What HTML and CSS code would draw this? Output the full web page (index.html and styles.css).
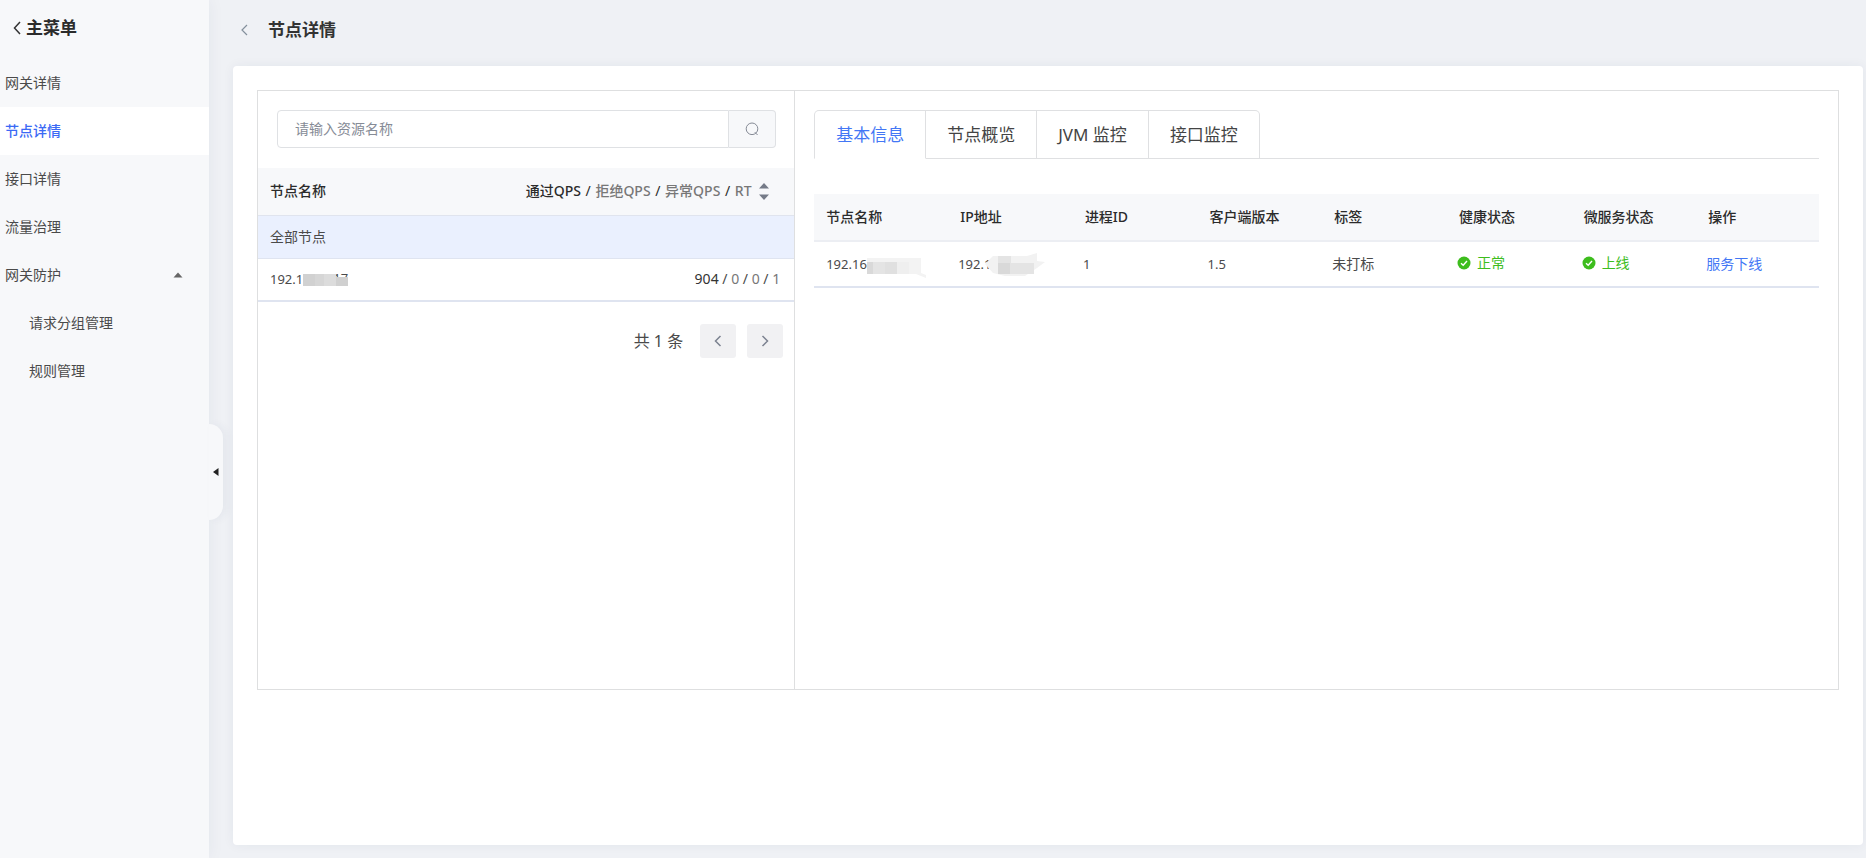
FILE: index.html
```html
<!DOCTYPE html>
<html lang="zh-CN">
<head>
<meta charset="utf-8">
<meta name="viewport" content="width=device-width, initial-scale=1">
<title>节点详情</title>
<link rel="stylesheet" href="styles.css">
</head>
<body>
<div class="app">
  <aside class="sidebar">
    <a class="menu-title" href="#">
      <svg class="menu-back" viewBox="0 0 8 14" width="8" height="14" aria-hidden="true"><path d="M7 1 L1.5 7 L7 13"/></svg>
      <span>主菜单</span>
    </a>
    <nav class="menu">
      <a class="menu-item" href="#">网关详情</a>
      <a class="menu-item menu-item-active" href="#">节点详情</a>
      <a class="menu-item" href="#">接口详情</a>
      <a class="menu-item" href="#">流量治理</a>
      <a class="menu-item" href="#"><span>网关防护</span>
        <svg class="menu-caret" viewBox="0 0 10 6" width="10" height="6" aria-hidden="true"><path d="M5 0.5 L9.5 5.5 H0.5 Z"/></svg>
      </a>
      <a class="menu-item menu-item-sub" href="#">请求分组管理</a>
      <a class="menu-item menu-item-sub" href="#">规则管理</a>
    </nav>
    <button class="collapse" type="button" aria-label="收起菜单">
      <svg viewBox="0 0 6 8" width="6" height="8" aria-hidden="true"><path d="M0 4 L5.5 0 V8 Z"/></svg>
    </button>
  </aside>

  <main class="main">
    <header class="page-head">
      <a class="page-back" href="#" aria-label="返回">
        <svg viewBox="0 0 7 12" width="7" height="12" aria-hidden="true"><path d="M6 1 L1 6 L6 11"/></svg>
      </a>
      <h1 class="page-title">节点详情</h1>
    </header>

    <section class="card">
      <div class="panel">
        <div class="nodes">
          <form class="search">
            <input class="search-input" type="text" placeholder="请输入资源名称" aria-label="资源名称">
            <button class="search-btn" type="button" aria-label="搜索">
              <svg viewBox="0 0 14 14" width="14" height="14" aria-hidden="true"><circle cx="7" cy="6.8" r="5.8"/><path d="M9.8 10.2 L12.6 13"/></svg>
            </button>
          </form>
          <table class="node-table">
            <thead>
              <tr>
                <th scope="col">节点名称</th>
                <th scope="col" class="qps-head">通过QPS <span class="slash">/</span> <span class="muted">拒绝QPS</span> <span class="slash">/</span> <span class="muted">异常QPS</span> <span class="slash">/</span> <span class="muted">RT</span>
                  <svg class="sort" viewBox="0 0 10 17" width="10" height="17" aria-hidden="true"><path d="M5 0 L10 5.5 H0 Z M0 11.5 H10 L5 17 Z"/></svg>
                </th>
              </tr>
            </thead>
            <tbody>
              <tr class="selected"><td colspan="2">全部节点</td></tr>
              <tr>
                <td class="num"><span class="masked">192.1<span class="mask-tail">17</span><svg class="mask mask-node" viewBox="0 0 45 12" width="45" height="12" aria-hidden="true"><path fill="#d1d1d1" d="M0 0h12v12H0z"/><path fill="#d6d6d6" d="M12 0h9v12h-9z"/><path fill="#dcdcdc" d="M21 0h12v12H21z"/><path fill="#d0d0d0" d="M33 3h12v9H33z"/></svg></span></td>
                <td class="qps"><span class="strong">904</span> / <span class="muted">0</span> / <span class="muted">0</span> / <span class="muted">1</span></td>
              </tr>
            </tbody>
          </table>
          <div class="pager">
            <span class="pager-total">共 1 条</span>
            <button class="pager-btn" type="button" aria-label="上一页"><svg viewBox="0 0 8 12" width="8" height="12" aria-hidden="true"><path d="M6.5 1 L1.5 6 L6.5 11"/></svg></button>
            <button class="pager-btn" type="button" aria-label="下一页"><svg viewBox="0 0 8 12" width="8" height="12" aria-hidden="true"><path d="M1.5 1 L6.5 6 L1.5 11"/></svg></button>
          </div>
        </div>

        <div class="detail">
          <div class="tabs" role="tablist">
            <button class="tab tab-active" type="button" role="tab" aria-selected="true">基本信息</button>
            <button class="tab" type="button" role="tab" aria-selected="false">节点概览</button>
            <button class="tab" type="button" role="tab" aria-selected="false">JVM 监控</button>
            <button class="tab" type="button" role="tab" aria-selected="false">接口监控</button>
          </div>
          <table class="info-table">
            <colgroup><col class="col-name"><col><col><col><col><col><col><col></colgroup>
            <thead>
              <tr>
                <th scope="col">节点名称</th><th scope="col">IP地址</th><th scope="col">进程ID</th><th scope="col">客户端版本</th><th scope="col">标签</th><th scope="col">健康状态</th><th scope="col">微服务状态</th><th scope="col">操作</th>
              </tr>
            </thead>
            <tbody>
              <tr>
                <td class="num"><span class="masked">192.16<svg class="mask mask-name" viewBox="0 0 60 20" width="60" height="20" aria-hidden="true"><path fill="#f3f3f3" d="M0 0h54v15l5 2v3l-10-4H0z"/><path fill="#efefef" d="M30 4h12v12H30z"/><path fill="#d9d9d9" d="M0 4h6v12H0z"/><path fill="#e4e4e4" d="M6 4h12v12H6z"/><path fill="#e0e0e0" d="M18 4h12v12H18z"/></svg></span></td>
                <td class="num"><span class="masked">192.1<svg class="mask mask-ip" viewBox="0 0 60 24" width="60" height="24" aria-hidden="true"><path fill="#f2f2f2" d="M8 3h34l10-3v8l8 1-8 6-12 8H20L8 20 0 11z"/><path fill="#e4e4e4" d="M13 3h13v7H13zM25 10h24v11H25z"/><path fill="#d9d9d9" d="M13 10h12v11H13z"/></svg></span></td>
                <td class="num">1</td>
                <td class="num">1.5</td>
                <td>未打标</td>
                <td><span class="status"><svg viewBox="0 0 14 14" width="14" height="14" aria-hidden="true"><circle cx="7" cy="7" r="6.5"/><path d="M4 7.2 L6.2 9.3 L10 5"/></svg>正常</span></td>
                <td><span class="status"><svg viewBox="0 0 14 14" width="14" height="14" aria-hidden="true"><circle cx="7" cy="7" r="6.5"/><path d="M4 7.2 L6.2 9.3 L10 5"/></svg>上线</span></td>
                <td><a class="action" href="#">服务下线</a></td>
              </tr>
            </tbody>
          </table>
        </div>
      </div>
    </section>
  </main>
</div>
</body>
</html>
```
FILE: styles.css
```css
* { box-sizing: border-box; }

body {
  margin: 0;
  background: #eff1f5;
  color: #4a4a4a;
  font-family: "Noto Sans", "Noto Sans CJK SC", sans-serif;
  font-size: 14px;
  line-height: 20px;
}

a { color: inherit; text-decoration: none; }
button, input { font: inherit; }
button { padding: 0; cursor: pointer; }
svg { display: block; }

.app { display: flex; min-height: 100vh; }

/* Sidebar */
.sidebar {
  position: relative;
  flex: none;
  width: 209px;
  background: #f7f8fa;
  box-shadow: 0 0 16px rgba(40, 50, 90, 0.06);
}
.menu-title {
  display: flex;
  align-items: center;
  gap: 5px;
  height: 59px;
  padding: 0 13px 3px;
  color: #2b2b2b;
  font-size: 17px;
  font-weight: 700;
}
.menu-back { fill: none; stroke: #333; stroke-width: 1.5; }
.menu-item {
  display: flex;
  align-items: center;
  justify-content: space-between;
  height: 48px;
  padding: 0 26px 0 5px;
}
.menu-item-active { background: #fff; color: #3b6af5; font-weight: 500; }
.menu-item-sub { padding-left: 29px; }
.menu-caret { fill: #666; }
.collapse {
  position: absolute;
  top: 424px;
  left: 100%;
  display: flex;
  align-items: center;
  width: 14px;
  height: 96px;
  padding-left: 4px;
  border: 0;
  border-radius: 0 14px 14px 0;
  background: #f7f8fa;
  box-shadow: 4px 0 8px rgba(40, 50, 90, 0.05);
}
.collapse svg { fill: #222; }

/* Page */
.main {
  display: flex;
  flex: 1;
  flex-direction: column;
  min-width: 0;
  padding: 0 3px 13px 24px;
}
.page-head {
  display: flex;
  align-items: center;
  gap: 20px;
  height: 66px;
  padding: 0 8px 6px;
}
.page-back svg { fill: none; stroke: #84909c; stroke-width: 1.2; }
.page-title { margin: 0; color: #333; font-size: 17px; font-weight: 700; }
.card {
  flex: 1;
  padding: 24px;
  border-radius: 4px;
  background: #fff;
  box-shadow: 0 0 12px rgba(40, 50, 90, 0.06);
}
.panel { display: flex; min-height: 600px; border: 1px solid #dedfe0; }

/* Node list */
.nodes { flex: none; width: 34%; border-right: 1px solid #dedfe0; }
.search { display: flex; height: 38px; margin: 19px 18px 20px 19px; }
.search-input {
  flex: 1;
  min-width: 0;
  padding: 0 17px;
  border: 1px solid #dfe1e4;
  border-radius: 4px 0 0 4px;
  color: #444;
}
.search-input::placeholder { color: #868b96; opacity: 1; }
.search-btn {
  display: grid;
  place-items: center;
  width: 47px;
  border: 1px solid #dfe1e4;
  border-left: 0;
  border-radius: 0 4px 4px 0;
  background: #f7f8fa;
}
.search-btn svg { fill: none; stroke: #868b96; stroke-width: 1; }

table { width: 100%; border-collapse: collapse; }
th, td { text-align: left; }
th { background: #f7f8fa; color: #2b2b2b; font-weight: 500; }
.num { font-size: 13px; }
.muted { color: #777; }
.strong { color: #333; }
.slash { margin: 0 1px; font-weight: 400; }

.node-table th { height: 47px; padding: 0 12px; border-bottom: 1px solid #e0e4ee; }
.node-table td { height: 43px; padding: 0 12px; border-bottom: 1px solid #dfe4f0; }
.node-table tbody tr:last-child td { border-bottom-width: 2px; }
.node-table .selected td { background: #eaf0fe; }
.node-table .qps-head { padding-right: 25px; text-align: right; white-space: nowrap; }
.sort { display: inline-block; margin-left: 4px; vertical-align: -4px; fill: #757b88; }
.node-table .qps { padding-right: 14px; text-align: right; }

/* Redacted address parts */
.masked { position: relative; }
.mask { position: absolute; left: 100%; }
.mask-tail { position: absolute; left: 100%; margin-left: 30px; line-height: 18px; }
.mask-node { top: 4px; }
.mask-name { top: 3px; }
.mask-ip { top: -2px; margin-left: -6px; }

.pager {
  display: flex;
  align-items: center;
  justify-content: flex-end;
  gap: 11px;
  padding: 22px 11px;
}
.pager-total { margin-right: 6px; font-size: 16px; }
.pager-btn {
  display: grid;
  place-items: center;
  width: 36px;
  height: 34px;
  border: 0;
  border-radius: 3px;
  background: #f1f1f3;
}
.pager-btn svg { fill: none; stroke: #7c8290; stroke-width: 1.5; }

/* Node detail */
.detail { flex: 1; min-width: 0; padding: 19px; }
.tabs { display: flex; height: 49px; border-bottom: 1px solid #dfe0e2; }
.tab {
  height: 49px;
  padding: 0 21px;
  border: 1px solid #dfe0e2;
  border-left-width: 0;
  background: #fff;
  color: #444;
  font-size: 17px;
}
.tab:first-child { border-left-width: 1px; border-top-left-radius: 5px; }
.tab:last-child { border-top-right-radius: 5px; }
.tab-active { border-bottom-color: #fff; color: #4377f5; }

.info-table { margin-top: 35px; table-layout: fixed; }
.col-name { width: 132px; }
.info-table th { height: 47px; padding: 0 14px; border-bottom: 2px solid #eceef3; }
.info-table th:first-child { padding-left: 12px; }
.info-table td { height: 46px; padding: 0 12px; border-bottom: 2px solid #dfe4f0; }
.status { display: inline-flex; align-items: center; gap: 6px; color: #3dbd1d; }
.status circle { fill: #3dbd1d; }
.status path { fill: none; stroke: #fff; stroke-width: 1.4; }
.action { color: #4377f5; }
```
